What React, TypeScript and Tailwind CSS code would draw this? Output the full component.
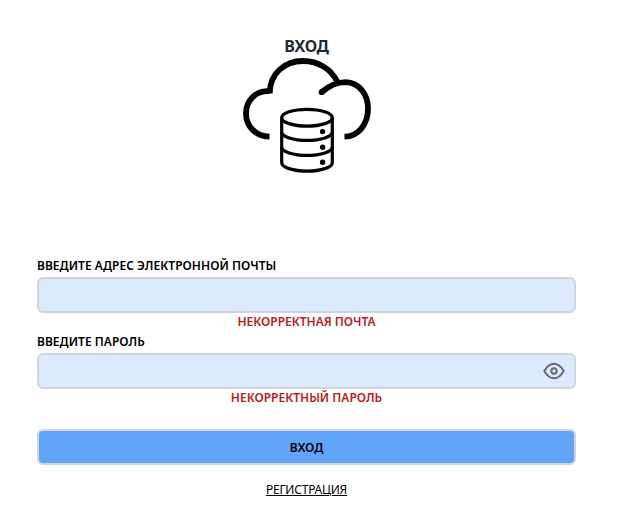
import React from "react";

function CloudDatabase() {
  return (
    <svg width="128" height="128" viewBox="243 51 128 128" fill="none" stroke="#000" strokeWidth="5.800">
      <path d="M269.500 136.700C256 136.500 246 126.500 246 113.500C246 100 256 90.500 269.500 91.200" />
      <path d="M269.700 93.500C269.700 73.500 284.500 61 303 61C318.500 61 331 69 337.500 82" />
      <path d="M321.500 92.200C328 86.500 336 82.100 346 82.100C359 82.500 368 94.500 368 108.500C368 124.500 358 136.500 344.500 136.700" />
      <circle cx="321.500" cy="92.200" r="2.900" fill="#000" stroke="none" />
      <g strokeWidth="3.200">
        <ellipse cx="307" cy="117.700" rx="25.300" ry="8.400" />
        <path d="M281.700 117.700V162.700A25.300 8.400 0 0 0 332.300 162.700V117.700" />
        <path d="M281.700 132A25.300 8.400 0 0 0 332.300 132M281.700 147A25.300 8.400 0 0 0 332.300 147" />
      </g>
      <g fill="#000" stroke="none">
        <circle cx="322.600" cy="131.600" r="2.700" />
        <circle cx="322.600" cy="147.200" r="2.700" />
        <circle cx="322.600" cy="162.200" r="2.700" />
      </g>
    </svg>
  );
}

function EyeIcon() {
  return (
    <svg width="24" height="24" viewBox="0 0 24 24" fill="none" stroke="#666b73" strokeWidth="1.900">
      <path d="M2.300 12C5 7.300 8 4.700 12 4.700s7 2.600 9.700 7.300c-2.700 4.700-5.700 7.300-9.700 7.300S5 16.700 2.300 12z" />
      <circle cx="12" cy="12" r="2.700" />
    </svg>
  );
}

export default function App() {
  return (
    <main className="flex h-[524px] w-[613px] flex-col px-[37px] pt-[35px] font-['Noto_Sans','Open_Sans',sans-serif] text-xs font-semibold text-black">
      <header className="flex h-[222px] flex-col items-center">
        <h1 className="h-4 text-base font-bold leading-[22px] tracking-[-0.3px] text-[#1f2937]">ВХОД</h1>
        <CloudDatabase />
      </header>
      <label className="h-5 leading-[18px] tracking-[0.03px]">ВВЕДИТЕ АДРЕС ЭЛЕКТРОННОЙ ПОЧТЫ</label>
      <input className="h-9 w-full rounded-md border-2 border-[#d1d5db] bg-[#dbeafe]" />
      <p className="h-5 text-center leading-[18px] text-[#b91c1c]">НЕКОРРЕКТНАЯ ПОЧТА</p>
      <label className="h-5 leading-[18px] tracking-[0.03px]">ВВЕДИТЕ ПАРОЛЬ</label>
      <div className="flex h-9 items-center justify-end rounded-md border-2 border-[#d1d5db] bg-[#dbeafe] pr-2"><EyeIcon /></div>
      <p className="h-10 text-center leading-[18px] text-[#b91c1c]">НЕКОРРЕКТНЫЙ ПАРОЛЬ</p>
      <button className="h-9 rounded-md border-2 border-[#d1d5db] bg-[#60a5fa] pt-0.5">ВХОД</button>
      <a className="mt-4 self-center font-normal leading-[18px] tracking-[-0.2px] underline">РЕГИСТРАЦИЯ</a>
    </main>
  );
}
